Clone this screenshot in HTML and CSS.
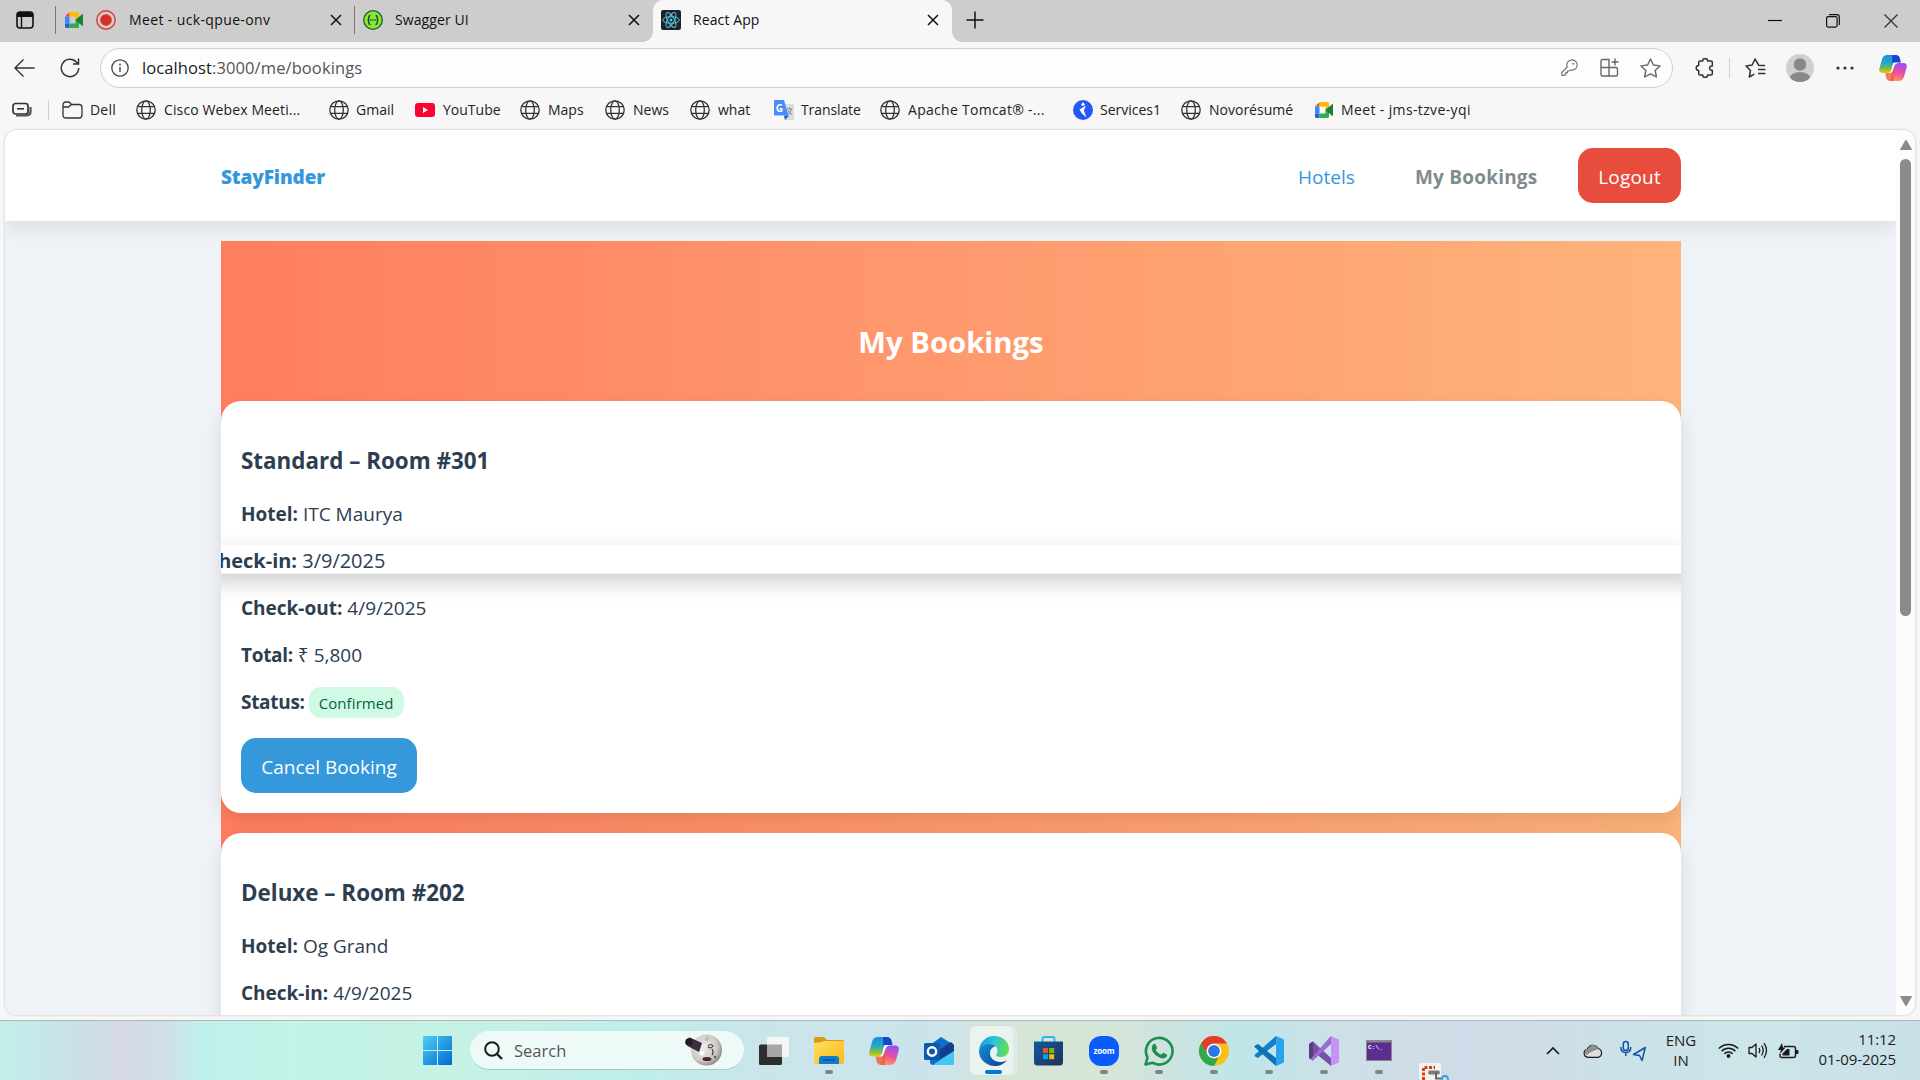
FILE: index.html
```html
<!DOCTYPE html>
<html lang="en">
<head>
<meta charset="utf-8">
<title>React App</title>
<link rel="stylesheet" href="styles.css">
</head>
<body>
<svg class="defs" width="0" height="0">
  <defs>
    <linearGradient id="gCopA" x1="0" y1="0" x2="0" y2="1"><stop offset="0" stop-color="#1a8fe3"/><stop offset=".45" stop-color="#25a7c9"/><stop offset=".75" stop-color="#7bbf3f"/><stop offset="1" stop-color="#f2c80f"/></linearGradient>
    <linearGradient id="gCopB" x1=".2" y1="0" x2="0" y2="1"><stop offset="0" stop-color="#a24df0"/><stop offset=".5" stop-color="#ee5396"/><stop offset="1" stop-color="#ffa15a"/></linearGradient>
    <linearGradient id="gWin" x1="0" y1="0" x2="1" y2="1"><stop offset="0" stop-color="#4cd0fb"/><stop offset="1" stop-color="#0069cb"/></linearGradient>
    <linearGradient id="gFold" x1="0" y1="0" x2="1" y2="1"><stop offset="0" stop-color="#ffdf66"/><stop offset="1" stop-color="#fbb90e"/></linearGradient>
    <linearGradient id="gEdgeA" x1="0" y1=".3" x2="1" y2=".4"><stop offset="0" stop-color="#1b9de2"/><stop offset=".5" stop-color="#2fc2d6"/><stop offset="1" stop-color="#66e04e"/></linearGradient>
    <linearGradient id="gEdgeB" x1="0" y1="0" x2="1" y2="1"><stop offset="0" stop-color="#1690dc"/><stop offset="1" stop-color="#0c3f8c"/></linearGradient>
    <linearGradient id="gStore" x1="0" y1="0" x2="1" y2="1"><stop offset="0" stop-color="#0f5a9c"/><stop offset="1" stop-color="#23305a"/></linearGradient>
    <radialGradient id="gMoon" cx=".4" cy=".4" r=".65"><stop offset="0" stop-color="#efedea"/><stop offset=".7" stop-color="#cdc8c2"/><stop offset="1" stop-color="#8a827b"/></radialGradient>
    <symbol id="globe" viewBox="0 0 20 20"><g fill="none" stroke="#333" stroke-width="1.3"><circle cx="10" cy="10" r="9.2"/><ellipse cx="10" cy="10" rx="4.3" ry="9.2"/><path d="M1.6 6.7h16.8M1.6 13.3h16.8"/></g></symbol>
    <symbol id="meet" viewBox="0 0 18 16"><path fill="#ea4335" d="M4.5 0v4.5H0z"/><path fill="#fbbc04" d="M4.5 0h8A1.5 1.5 0 0 1 14 1.5V6l-3.5 3V4.5h-6z"/><path fill="#4285f4" d="M0 4.5h4.5v7H0z"/><path fill="#1967d2" d="M0 11.500h4.500V16h-3A1.500 1.500 0 0 1 0 14.500z"/><path fill="#34a853" d="M4.500 11.500h6V8L14 5v9.500a1.500 1.500 0 0 1-1.500 1.500h-8z"/><path fill="#188038" d="M10.500 8 17 2.200q1-.6 1 .6v10.400q0 1.200-1 .6z"/></symbol>
    <symbol id="close" viewBox="0 0 12 12"><path d="M1 1l10 10M11 1 1 11" fill="none" stroke="#111" stroke-width="1.500"/></symbol>
    <symbol id="copilot" viewBox="0 0 30 28"><path fill="url(#gCopA)" d="M8.500 0h10L14 15q-1.300 4.500-5.500 4.500H4Q-1 19.500.5 14L3 5Q4.500 0 8.500 0z"/><path fill="#1448c8" d="M14 0h4q3.500 0 4.500 3.500L23.500 8H18q-2.500 0-3.500 3z"/><path fill="url(#gCopB)" d="M21.500 28h-10L16 13q1.300-4.500 5.500-4.500H26q5 0 3.500 5.500L27 23q-1.500 5-5.500 5z"/><path fill="#f2552c" d="M16 28h-4q-3.500 0-4.500-4L6.700 19.500H11q3 0 4-3.500l1-3z" opacity=".75"/><path fill="#f7fbfd" d="M15 8.300h5q-3 .5-4 4.200l-1.300 4.200q-.8 2.600-3.200 2.800H10q2.500-.6 3.200-3.300z"/></symbol>
  </defs>
</svg>
<div class="screen">
  <div class="tabstrip">
    <div class="tab-actions"><svg width="18" height="18" viewBox="0 0 18 18"><rect x="1" y="1" width="16" height="16" rx="3" fill="none" stroke="#111" stroke-width="1.600"/><path d="M1 6V4q0-3 3-3h10q3 0 3 3v2z" fill="#111"/><path d="M5.500 6v11" stroke="#111" stroke-width="1.400"/></svg></div>
    <div class="tab first">
      <svg class="meet" width="18" height="16"><use href="#meet"/></svg>
      <svg class="rec" width="20" height="20"><circle cx="10" cy="10" r="9.200" fill="none" stroke="#dd3b31" stroke-width="1.400"/><circle cx="10" cy="10" r="5.800" fill="#d93025"/></svg>
      <span class="title t-meet">Meet - uck-qpue-onv</span>
      <svg class="x" width="12" height="12"><use href="#close"/></svg>
    </div>
    <div class="tab second">
      <svg width="20" height="20" viewBox="0 0 20 20"><circle cx="10" cy="10" r="9.300" fill="#85ea2d" stroke="#2d5540" stroke-width="1.300"/><path d="M7.500 5.500Q5.800 5.500 5.800 7v1.500Q5.800 10 4.500 10q1.300 0 1.300 1.500V13q0 1.500 1.700 1.500M12.500 5.500q1.700 0 1.700 1.500v1.500q0 1.500 1.300 1.500-1.300 0-1.300 1.500V13q0 1.500-1.700 1.500" fill="none" stroke="#173647" stroke-width="1.300"/><path d="M7.200 10h1.200M9.400 10h1.200M11.600 10h1.200" stroke="#173647" stroke-width="1.300"/></svg>
      <span class="title t-swag">Swagger UI</span>
      <svg class="x" width="12" height="12"><use href="#close"/></svg>
    </div>
    <div class="tab active">
      <svg width="20" height="20" viewBox="0 0 20 20"><rect width="20" height="20" rx="2" fill="#20232a"/><g fill="none" stroke="#56c5e0" stroke-width="1"><ellipse cx="10" cy="10" rx="8.300" ry="3.300"/><ellipse cx="10" cy="10" rx="8.300" ry="3.300" transform="rotate(60 10 10)"/><ellipse cx="10" cy="10" rx="8.300" ry="3.300" transform="rotate(120 10 10)"/></g><circle cx="10" cy="10" r="1.500" fill="#56c5e0"/></svg>
      <span class="title t-react">React App</span>
      <svg class="x" width="12" height="12"><use href="#close"/></svg>
    </div>
    <svg class="plus" width="18" height="18"><path d="M9 .5v17M.5 9h17" stroke="#111" stroke-width="1.500"/></svg>
    <div class="winbtns">
      <svg width="14" height="14"><path d="M0 6.500h14" stroke="#111" stroke-width="1.200"/></svg>
      <svg width="14" height="14"><rect x=".6" y="2.600" width="10.500" height="10.500" rx="1.500" fill="none" stroke="#111" stroke-width="1.200"/><path d="M3 .6h8q2.300 0 2.300 2.300v8" fill="none" stroke="#111" stroke-width="1.200"/></svg>
      <svg width="14" height="14"><path d="M.5.500l13 13M13.500.500l-13 13" stroke="#333" stroke-width="1.300"/></svg>
    </div>
  </div>

  <div class="toolbar">
    <svg class="back" width="21" height="18"><path d="M20.500 9H1M9.500.600 1 9l8.500 8.400" fill="none" stroke="#333" stroke-width="1.400"/></svg>
    <svg class="reload" width="20" height="20"><path d="M18.700 10A8.700 8.700 0 1 1 16.500 4.200L18.500 6M18.500.5V6H13" fill="none" stroke="#333" stroke-width="1.500"/></svg>
    <div class="address">
      <svg width="18" height="18"><circle cx="9" cy="9" r="8.200" fill="none" stroke="#444" stroke-width="1.300"/><path d="M9 8v5" stroke="#444" stroke-width="1.400"/><circle cx="9" cy="5.500" r=".9" fill="#444"/></svg>
      <span class="url"><b>localhost</b>:3000/me/bookings</span>
      <div class="addr-icons">
        <svg width="17" height="17" viewBox="0 0 17 17"><path d="M11 .8a5.200 5.200 0 1 1-1.400 10.200L8 12H6.500v1.700H4.700v1.700L3.500 16.300H.9V13.500L6.200 8A5.200 5.200 0 0 1 11 .8z" fill="none" stroke="#777" stroke-width="1.200"/><circle cx="12.200" cy="4.800" r="1" fill="#777"/></svg>
        <svg width="19" height="19" viewBox="0 0 19 19"><path d="M9 18V1.500H2.500q-1.500 0-1.500 1.500V16.500Q1 18 2.500 18H16q1.500 0 1.500-1.500V11q0-1.500-1.500-1.500H1M15 .5v7M11.500 4h7" fill="none" stroke="#666" stroke-width="1.400"/></svg>
        <svg width="21" height="20" viewBox="0 0 21 20"><path d="M10.500 1l2.900 6 6.600.9-4.800 4.600 1.200 6.500-5.900-3.100L4.600 19l1.200-6.500L1 7.900 7.600 7z" fill="none" stroke="#666" stroke-width="1.400" stroke-linejoin="round"/></svg>
      </div>
    </div>
    <svg class="puzzle" width="20" height="20" viewBox="0 0 20 20"><path d="M5 3h2.700a2.500 2.500 0 0 1 5 0H16q1.300 0 1.300 1.300V8a2.200 2.200 0 1 0 0 4.300v3.500q0 1.300-1.300 1.300h-3.300a2.500 2.500 0 0 1-5 0H5q-1.300 0-1.300-1.300v-3.300a2.500 2.500 0 0 1 0-5V4.300Q3.700 3 5 3z" fill="none" stroke="#333" stroke-width="1.500" stroke-linejoin="round"/></svg>
    <i class="vsep"></i>
    <svg class="favs" width="21" height="20" viewBox="0 0 21 20"><path d="M20 7.600h-6L10 1 7.200 7 1 7.900l4.500 4.600L4.300 19l5-2.800M13 11.500h7.500M13 15.500h7.500" fill="none" stroke="#333" stroke-width="1.500" stroke-linejoin="round"/></svg>
    <svg class="avatar" width="28" height="28"><clipPath id="av"><circle cx="14" cy="14" r="14"/></clipPath><g clip-path="url(#av)"><rect width="28" height="28" fill="#d2d0ce"/><circle cx="14" cy="10.500" r="6.200" fill="#8a8886"/><ellipse cx="14" cy="25" rx="10.500" ry="7" fill="#8a8886"/></g></svg>
    <svg class="dots" width="18" height="4"><circle cx="2" cy="2" r="1.600"/><circle cx="9" cy="2" r="1.600"/><circle cx="16" cy="2" r="1.600"/></svg>
    <svg class="cop" width="28" height="26"><use href="#copilot"/></svg>
  </div>

  <div class="bookmarks">
    <div class="bm b0"><svg width="20" height="16"><rect x="1" y="1.500" width="15" height="10.500" rx="2.500" fill="none" stroke="#333" stroke-width="1.700"/><path d="M5 6.800h7" stroke="#333" stroke-width="1.600"/><path d="M4 13.300h11q3.500 0 3.500-3.500V5" fill="none" stroke="#555" stroke-width="2.200"/></svg></div>
    <div class="bm b1"><svg width="21" height="18"><path d="M1 4Q1 1 4 1h3l2.500 2.500H17q3 0 3 3V14q0 3-3 3H4q-3 0-3-3zM1 6h5.500L9.500 3.500" fill="none" stroke="#333" stroke-width="1.300"/></svg><span>Dell</span></div>
    <div class="bm b2"><svg width="20" height="20"><use href="#globe"/></svg><span>Cisco Webex Meeti...</span></div>
    <div class="bm b3"><svg width="20" height="20"><use href="#globe"/></svg><span>Gmail</span></div>
    <div class="bm b4"><svg width="20" height="14"><rect width="20" height="14" rx="3" fill="#ff0033"/><path d="M8 4l5 3-5 3z" fill="#fff"/></svg><span>YouTube</span></div>
    <div class="bm b5"><svg width="20" height="20"><use href="#globe"/></svg><span>Maps</span></div>
    <div class="bm b6"><svg width="20" height="20"><use href="#globe"/></svg><span>News</span></div>
    <div class="bm b7"><svg width="20" height="20"><use href="#globe"/></svg><span>what</span></div>
    <div class="bm b8"><svg width="20" height="20"><path d="M8 4h11q1 0 1 1v14q0 1-1 1h-8z" fill="#dcdcdc"/><path d="M10 15.500h5L11 20z" fill="#2a56c6"/><path d="M1 0h9l4.500 15.500H1q-1 0-1-1V1Q0 0 1 0z" fill="#4a8cf5"/><text x="1.800" y="12" class="g-letter">G</text><path d="M12.500 9h6M15.500 7.500V9M17.500 9q-1 4-4 5.500M14 10.500q1 2.500 4 4" fill="none" stroke="#7a8b99" stroke-width="1"/></svg><span>Translate</span></div>
    <div class="bm b9"><svg width="20" height="20"><use href="#globe"/></svg><span>Apache Tomcat® -...</span></div>
    <div class="bm b10"><svg width="20" height="20"><circle cx="10" cy="10" r="10" fill="#2558f5"/><path d="M10 2l2 2.800-2 1.300-2-1.100zM6.500 9.500 13 5.500 10.800 10.500 13.500 17.500 9 13.500z" fill="#fff"/></svg><span>Services1</span></div>
    <div class="bm b11"><svg width="20" height="20"><use href="#globe"/></svg><span>Novorésumé</span></div>
    <div class="bm b12"><svg width="18" height="16"><use href="#meet"/></svg><span>Meet - jms-tzve-yqi</span></div>
  </div>

  <div class="frame">
    <main class="page">
      <nav class="nav">
        <a class="brand">StayFinder</a>
        <a class="hotels">Hotels</a>
        <a class="mine">My Bookings</a>
        <button class="logout">Logout</button>
      </nav>
      <section class="content">
        <h2>My Bookings</h2>
        <article class="card">
          <h3>Standard – Room #301</h3>
          <p><strong>Hotel:</strong> ITC Maurya</p>
          <p class="lifted"><strong>Check-in:</strong> 3/9/2025</p>
          <p><strong>Check-out:</strong> 4/9/2025</p>
          <p><strong class="tight">Total:</strong> ₹ 5,800</p>
          <p><strong class="tight">Status:</strong> <span class="badge">Confirmed</span></p>
          <button class="cancel">Cancel Booking</button>
        </article>
        <article class="card">
          <h3>Deluxe – Room #202</h3>
          <p><strong>Hotel:</strong> Og Grand</p>
          <p><strong>Check-in:</strong> 4/9/2025</p>
        </article>
      </section>
    </main>
    <div class="scroll">
      <svg width="14" height="12"><path d="M7 1l5.500 9.500h-11z" fill="#8b8b8b" stroke="#8b8b8b" stroke-linejoin="round"/></svg>
      <i class="thumb"></i>
      <svg width="14" height="12"><path d="M7 11 1.500 1.500h11z" fill="#8b8b8b" stroke="#8b8b8b" stroke-linejoin="round"/></svg>
    </div>
  </div>

  <footer class="taskbar">
    <svg class="win" width="29" height="29"><path d="M0 1q0-1 1-1h13v14H0zM15 0h13q1 0 1 1v13H15zM0 15h14v14H1q-1 0-1-1zM15 15h14v13q0 1-1 1H15z" fill="url(#gWin)"/></svg>
    <div class="search">
      <svg width="19" height="19"><circle cx="8" cy="8" r="6.800" fill="none" stroke="#1c1c1c" stroke-width="2"/><path d="M13 13l5 5" stroke="#1c1c1c" stroke-width="2.400"/></svg>
      <span>Search</span>
      <svg class="moon" width="37" height="32"><circle cx="21.500" cy="16" r="15.500" fill="url(#gMoon)"/><path d="M2 5.500Q4 2.500 6 4l11 5-3 9L2.500 12z" fill="#3c2f3d"/><circle cx="4" cy="8" r="3.800" fill="#241a28"/><path d="M23 12q3-3 5 0-2 3-5 1M27 15q2 4 0 6M29 22l2 2" fill="none" stroke="#4a403c" stroke-width="1.200"/><ellipse cx="22" cy="25" rx="4.500" ry="2" fill="#46252b"/><circle cx="17" cy="19" r="2.500" fill="#fff"/><circle cx="22" cy="5" r="2" fill="#bdb8b2"/></svg>
    </div>
    <div class="apps">
      <div class="app"><svg width="30" height="28"><rect y="7.500" width="23" height="20.500" rx="1.500" fill="#2e2e2e"/><rect x="8" width="22" height="20" rx="1.500" fill="#f6f6f6"/><path d="M8 7.500h15V20H9.500Q8 20 8 18.500z" fill="#a6a6a6"/></svg></div>
      <div class="app run"><svg width="30" height="27"><path d="M0 2q0-2 2-2h8l3 3h15q2 0 2 2v5H0z" fill="#dd9a0c"/><path d="M0 6q6 0 10-2h18q2 0 2 2v18q0 3-2 3H2q-2 0-2-2z" fill="url(#gFold)"/><path d="M5 27v-5q0-3 3-3h14q3 0 3 3v5z" fill="#1179cf"/><path d="M9 23h12" stroke="#084a8c" stroke-width="1.300"/></svg></div>
      <div class="app"><svg width="30" height="28"><use href="#copilot"/></svg></div>
      <div class="app"><svg width="30" height="28"><path d="M6 8 17 0l13 8v17q0 3-3 3H9q-3 0-3-3z" fill="#0d6fca"/><path d="M15 13 27 5l3 3v6l-15 9z" fill="#143d8c"/><path d="M16 23 30 14v11q0 3-3 3H9z" fill="#42c8f5"/><rect y="6" width="16" height="17" rx="1.500" fill="#0c59a9"/><circle cx="8" cy="14.500" r="4.200" fill="none" stroke="#fff" stroke-width="2.400"/></svg></div>
      <div class="app current"><svg width="30" height="30"><path d="M0 15A15 15 0 0 1 15 0C24 0 30 6 30 13c0 5-3.500 8-8 8-3 0-5-1-5-2s1.500-1.600 1.500-4.500C18.500 11 15.500 8.300 11 8.300 5 8.300 1 12 0 15z" fill="url(#gEdgeA)"/><path d="M0 15C1 10.500 5.500 8 10.500 8c2.500 0 4.500.8 6 2.200C13 11 11 14 11 17c0 5.500 4.500 9 10 9 3 0 5-.8 6.800-1.800C25.300 27.700 20.800 30 16 30 7 30 0 23 0 15z" fill="url(#gEdgeB)"/></svg></div>
      <div class="app"><svg width="29" height="30"><path d="M8.500 7V3q0-2 2-2h8q2 0 2 2v4" fill="none" stroke="#29b8f0" stroke-width="2"/><path d="M0 5.500h29V26q0 3.500-3.500 3.500h-22Q0 29.500 0 26z" fill="url(#gStore)"/><path d="M9 12h5v5H9z" fill="#f25022"/><path d="M15.200 12h5v5h-5z" fill="#7fba00"/><path d="M9 18.200h5v5H9z" fill="#00a4ef"/><path d="M15.200 18.200h5v5h-5z" fill="#ffb900"/></svg></div>
      <div class="app run"><svg width="30" height="30"><rect width="30" height="30" rx="12" fill="#0b5cff"/><text x="15" y="17.500" class="zoom-word" text-anchor="middle" textLength="21">zoom</text></svg></div>
      <div class="app run"><svg width="30" height="30"><path d="M1.500 28.500l2-7A13.300 13.300 0 1 1 8.500 26.700z" fill="none" stroke="#1d8f4e" stroke-width="2.600" stroke-linejoin="round"/><path d="M9 8.500q2-1.500 3 .5l1 2.500q.3 1-1.300 2.500 2 3.500 5.500 4.700 1.800-2.200 2.600-1.800l3 1.500q1 .8-.5 2.700-2.500 2.500-7 .5T8.600 15.500Q6.800 11 9 8.500z" fill="#1d8f4e"/></svg></div>
      <div class="app run"><svg width="30" height="30"><circle cx="15" cy="15" r="15" fill="#fbc116"/><path d="M2 7.500A15 15 0 0 1 28 7.500H15A7.500 7.500 0 0 0 8.500 18.700z" fill="#e33b2e"/><path d="M2 7.500 8.500 18.700A7.500 7.500 0 0 0 20 20.500L15 30A15 15 0 0 1 2 7.500z" fill="#2da94f"/><circle cx="15" cy="15" r="7.300" fill="#fff"/><circle cx="15" cy="15" r="5.900" fill="#2a76ee"/></svg></div>
      <div class="app run"><svg width="30" height="30"><path d="M22 0v8L4 22 1 20.500q-1-1 0-2z" fill="#1380c8"/><path d="M22 30v-8L4 8 1 9.500q-1 1 0 2z" fill="#0f72b8"/><path d="M22 0l7 3q1 .5 1 1.500v21q0 1-1 1.500l-7 3z" fill="#2aa3ee"/></svg></div>
      <div class="app run"><svg width="30" height="30"><path d="M0 8l4-2.500L22 22v8L7.500 18 4 24.500 0 22z" fill="#7b4fa8"/><path d="M0 8l4-2.500V24.500L0 22z" fill="#5c3a86"/><path d="M22 0v8L4 24.500 1.500 23z" fill="#9a6bd0"/><path d="M22 0l8 3.500v23L22 30z" fill="#c792f5"/></svg></div>
      <div class="app run"><svg width="26" height="21"><rect width="26" height="21" fill="#8b8793"/><rect x="1" y="2.500" width="24" height="17.500" fill="#5a2d91"/><text x="2" y="9" class="cmd">C:\_</text></svg></div>
    </div>
    <svg class="snip" width="30" height="17"><rect width="22" height="17" rx="2" fill="#f5f1ee"/><path d="M4.500 17V4.500H16" fill="none" stroke="#d8400f" stroke-width="3" stroke-dasharray="3 1.500"/><rect x="9" y="7.500" width="12" height="4" rx="2" fill="#7b7b7b"/><path d="M17 9v6.500h5" fill="none" stroke="#666" stroke-width="2"/><circle cx="26" cy="16" r="3" fill="none" stroke="#29a3e8" stroke-width="1.800"/></svg>
    <div class="tray">
      <svg class="chev" width="14" height="8"><path d="M1 7l6-6 6 6" fill="none" stroke="#1a1a1a" stroke-width="1.700"/></svg>
      <svg class="cloud" width="20" height="14"><path d="M5 13.300a4.200 4.200 0 0 1-.5-8.300A5.700 5.700 0 0 1 15 4.500a4.500 4.500 0 0 1 0 8.800z" fill="#dedede" stroke="#1a1a1a" stroke-width="1.200"/><path d="M2 8q0-3 3-3.500Q7 1 10 1q3.500 0 5 4l-8 3.500-4 3z" fill="#8f8f8f"/></svg>
      <svg class="mic" width="27" height="22"><g fill="none" stroke="#1252a6" stroke-width="1.500"><rect x="3.300" y="1.500" width="5" height="9" rx="2.500"/><path d="M.8 7q0 5.500 5 5.500t5-5.500M5.800 12.500V16"/><path d="M25.300 7.500 13.500 14.500l6 1 2.500 5z" stroke-linejoin="round"/></g></svg>
      <div class="lang">ENG<br>IN</div>
      <svg class="wifi" width="21" height="15"><g fill="none" stroke="#1a1a1a" stroke-width="1.500"><path d="M.8 5.500a13.500 13.500 0 0 1 19.400 0M3.600 8.200a9.700 9.700 0 0 1 13.800 0M6.300 10.800a6 6 0 0 1 8.400 0"/></g><circle cx="10.500" cy="13" r="1.900" fill="#1a1a1a"/></svg>
      <svg class="spk" width="21" height="17"><g fill="none" stroke="#1a1a1a" stroke-width="1.300"><path d="M1 5.500h3L8 2v13l-4-3.500H1z" stroke-linejoin="round"/><path d="M11 6q1.500 2.500 0 5M13.500 3.500q3.500 5 0 10M16 1.200q5 7.300 0 14.600"/></g></svg>
      <svg class="bat" width="21" height="16"><path d="M6 3.500h9.500q2 0 2 2v7q0 2-2 2H4q-2 0-2-2V11" fill="none" stroke="#1a1a1a" stroke-width="1.400"/><path d="M4.500 12.500v-2L9 6h2.500v6.500z" fill="#1a1a1a"/><path d="M18 7h1.500q1 0 1 1v2q0 1-1 1H18zM4 0 0 7h3L1.500 11.500 7.500 4.500H5z" fill="#1a1a1a"/></svg>
      <div class="clock">11:12<br>01-09-2025</div>
    </div>
  </footer>
</div>
</body>
</html>
```
FILE: styles.css
```css
* { box-sizing: border-box; }
html, body { margin: 0; height: 100%; overflow: hidden; }
body { font-family: "Open Sans", "Noto Sans", sans-serif; color: #1a1a1a; }
svg { display: block; flex: none; }
.defs { position: absolute; }
.screen { width: 1920px; height: 1080px; display: flex; flex-direction: column; background: #f7f7f7; overflow: hidden; }

/* tab strip */
.tabstrip { height: 42px; flex: none; display: flex; align-items: center; background: #cdcdcd; padding-bottom: 3px; }
.tab-actions { width: 55px; padding-left: 16px; }
.tab { display: flex; align-items: center; height: 28px; }
.tab .x { margin-left: auto; }
.title { font-size: 14px; white-space: nowrap; color: #111; }
.t-meet { letter-spacing: .37px; }
.t-swag { letter-spacing: .1px; }
.first { width: 299px; border-left: 1px solid #777; padding: 0 12px 0 9px; }
.first .rec { margin: 0 13px; }
.second { width: 299px; border-left: 1px solid #777; padding: 0 13px 0 8px; }
.second .title { margin-left: 12px; }
.active { width: 299px; height: 42px; margin-bottom: -3px; padding: 0 13px 3px 8px; background: #f7f7f7; border-radius: 10px 10px 0 0; position: relative; }
.active::before, .active::after { content: ""; position: absolute; bottom: 0; width: 10px; height: 10px; }
.active::before { left: -10px; background: radial-gradient(circle at 0 0, transparent 9.5px, #f7f7f7 10px); }
.active::after { right: -10px; background: radial-gradient(circle at 100% 0, transparent 9.5px, #f7f7f7 10px); }
.active .title { margin-left: 12px; letter-spacing: .1px; }
.plus { margin-left: 14px; }
.winbtns { margin-left: auto; display: flex; gap: 44px; padding: 3px 22px 0 0; }

/* toolbar */
.toolbar { height: 52px; flex: none; display: flex; align-items: center; padding: 0 0 1px 14px; }
.reload { margin-left: 25px; }
.address { width: 1573px; height: 40px; margin-left: 20px; flex: none; display: flex; align-items: center; border: 1px solid #cfcfcf; border-radius: 20px; background: #fdfdfd; padding: 0 11px 0 10px; }
.url { font-size: 16.5px; letter-spacing: .1px; margin-left: 13px; padding-bottom: 1px; color: #555; }
.url b { font-weight: 400; color: #1a1a1a; }
.addr-icons { margin-left: auto; display: flex; align-items: center; gap: 21px; }
.addr-icons svg:first-child { margin-right: 1px; }
.puzzle { margin-left: 22px; }
.vsep { width: 1px; height: 20px; background: #cfcfcf; margin: 0 15px 0 14px; }
.avatar { margin-left: 20px; }
.dots { margin-left: 22px; fill: #333; }
.cop { margin-left: 25px; }

/* bookmarks bar */
.bookmarks { height: 36px; flex: none; display: flex; align-items: center; padding: 0 0 5px 12px; }
.bm { display: flex; align-items: center; gap: 8px; font-size: 14px; white-space: nowrap; color: #222; flex: none; }
.bm span { padding-bottom: 1px; }
.b0 { width: 37px; height: 20px; border-right: 1px solid #cfcfcf; margin-right: 13px; }
.b1 { width: 74px; gap: 7px; letter-spacing: .2px; }
.b2 { width: 193px; letter-spacing: .12px; }
.b3 { width: 86px; gap: 7px; }
.b4 { width: 105px; }
.b5 { width: 85px; }
.b6 { width: 85px; }
.b7 { width: 84px; }
.b8 { width: 106px; gap: 7px; letter-spacing: -.1px; }
.b9 { width: 193px; letter-spacing: .28px; }
.b10 { width: 108px; gap: 7px; }
.b11 { width: 134px; }
.b12 { letter-spacing: .37px; }
.g-letter { font: bold 10px "Open Sans", sans-serif; fill: #fff; }

/* page frame */
.frame { margin: 0 5px 5px; height: 885px; flex: none; display: flex; border-radius: 12px; overflow: hidden; box-shadow: 0 0 2px 1px #dcdcdc; background: #fcfcfc; }
.page { width: 1891px; height: 885px; overflow: hidden; background: #eff3f8; color: #2c3e50; font-size: 19px; line-height: 31px; }
.nav { height: 91px; display: flex; align-items: center; padding: 0 215px 0 216px; background: #fff; box-shadow: 0 5px 20px rgba(0,0,0,.1); white-space: nowrap; }
.nav a { padding-top: 3px; }
.brand { color: #3498db; font-weight: 800; margin-right: auto; letter-spacing: -.1px; }
.hotels { color: #3498db; width: 117px; }
.mine { color: #7f8c8d; font-weight: 700; width: 163px; letter-spacing: .2px; }
button { font: inherit; border: 0; color: #fff; border-radius: 15px; padding: 3px 0 0; height: 55px; display: block; white-space: nowrap; }
.logout { width: 103px; background: #e74c3c; letter-spacing: .2px; }
.content { width: 1460px; margin: 20px 0 0 216px; padding-top: 79px; background: linear-gradient(90deg, #ff7e5f, #feb47b); }
h2 { margin: 0 0 36px; height: 45px; line-height: 45px; font-size: 29.3px; color: #fff; text-align: center; }
.card { height: 412px; margin-bottom: 20px; padding: 43px 20px 20px; border-radius: 20px; background: #fff; overflow: hidden; box-shadow: 0 8px 20px rgba(0,0,0,.1); white-space: nowrap; }
.card h3 { margin: 0 0 22px; height: 33px; line-height: 33px; font-size: 22.4px; }
.card p { margin: 0 0 20px; height: 27px; }
.card .lifted { transform: scale(1.05); background: #fff; box-shadow: 0 8px 20px rgba(0,0,0,.2); }
.tight { letter-spacing: -.3px; }
.badge { display: inline-block; height: 31px; line-height: 32px; margin: -2px 0 1px -1px; padding: 0 10px; border-radius: 12px; background: #d1fae5; color: #065f46; font-size: 15px; letter-spacing: .1px; vertical-align: middle; }
.card .cancel { width: 176px; margin-top: 24px; background: #3498db; }

.scroll { width: 19px; display: flex; flex-direction: column; align-items: center; padding: 9px 0 8px; background: #fcfcfc; }
.thumb { width: 11px; height: 457px; margin: 8px 0 auto; border-radius: 6px; background: #8b8b8b; }

/* taskbar */
.taskbar { height: 60px; flex: none; display: flex; align-items: center; border-top: 1px solid #a9b8bd; padding: 0 24px 0 423px;
  background: linear-gradient(90deg, #c0efea 0, #c8e2e8 70px, #d6d8e8 125px, #cfe0e9 170px, #c0f0ec 200px, #c2f4e7 290px, #c5f2e5 460px, #bfeeea 640px, #cae5ea 760px, #cbe4ec 930px, #d6e5d8 1010px, #d5e5d8 1110px, #cde3e0 1170px, #bfe6e8 1240px, #cde0e8 1340px, #cfdce8 1430px, #d0dbe8 1500px, #cbe2e9 1640px, #cce6e9 1750px, #cae0e9 1920px); }
.search { width: 274px; height: 39px; margin-left: 18px; display: flex; align-items: center; border-radius: 20px; border-bottom: 1px solid #a9c9c9; background: #edfaf8; padding: 0 22px 0 14px; flex: none; }
.search span { font-size: 16.5px; margin-left: 11px; color: #555; }
.moon { margin-left: auto; }
.apps { display: flex; margin-left: 2px; height: 59px; }
.app { width: 55px; height: 59px; display: flex; align-items: center; justify-content: center; position: relative; }
.run::after, .current::after { content: ""; position: absolute; left: 24px; top: 49px; width: 8px; height: 4px; border-radius: 2px; background: #7c8784; }
.current::before { content: ""; position: absolute; left: 4px; top: 5px; width: 43px; height: 49px; border-radius: 5px; background: #eaf3f0; box-shadow: 4px 0 0 #dfebe6, 0 0 0 1px #d2dfda; }
.current svg { position: relative; }
.current::after { left: 19px; width: 17px; background: #0078d4; }
.snip { margin: 42px 0 0 13px; }
.tray { margin-left: auto; display: flex; align-items: center; font-size: 15px; line-height: 19.5px; color: #222; }
.cloud { margin-left: 23px; }
.mic { margin-left: 17px; }
.lang { width: 50px; margin-left: 9px; text-align: center; }
.wifi { margin-left: 12px; }
.spk { margin-left: 9px; }
.bat { margin-left: 9px; }
.clock { width: 97px; padding-bottom: 2px; text-align: right; white-space: nowrap; letter-spacing: -.08px; }
.zoom-word { font: bold 8px "Open Sans", sans-serif; fill: #fff; }
.cmd { font: bold 6px "Liberation Mono", monospace; fill: #fff; }
```
